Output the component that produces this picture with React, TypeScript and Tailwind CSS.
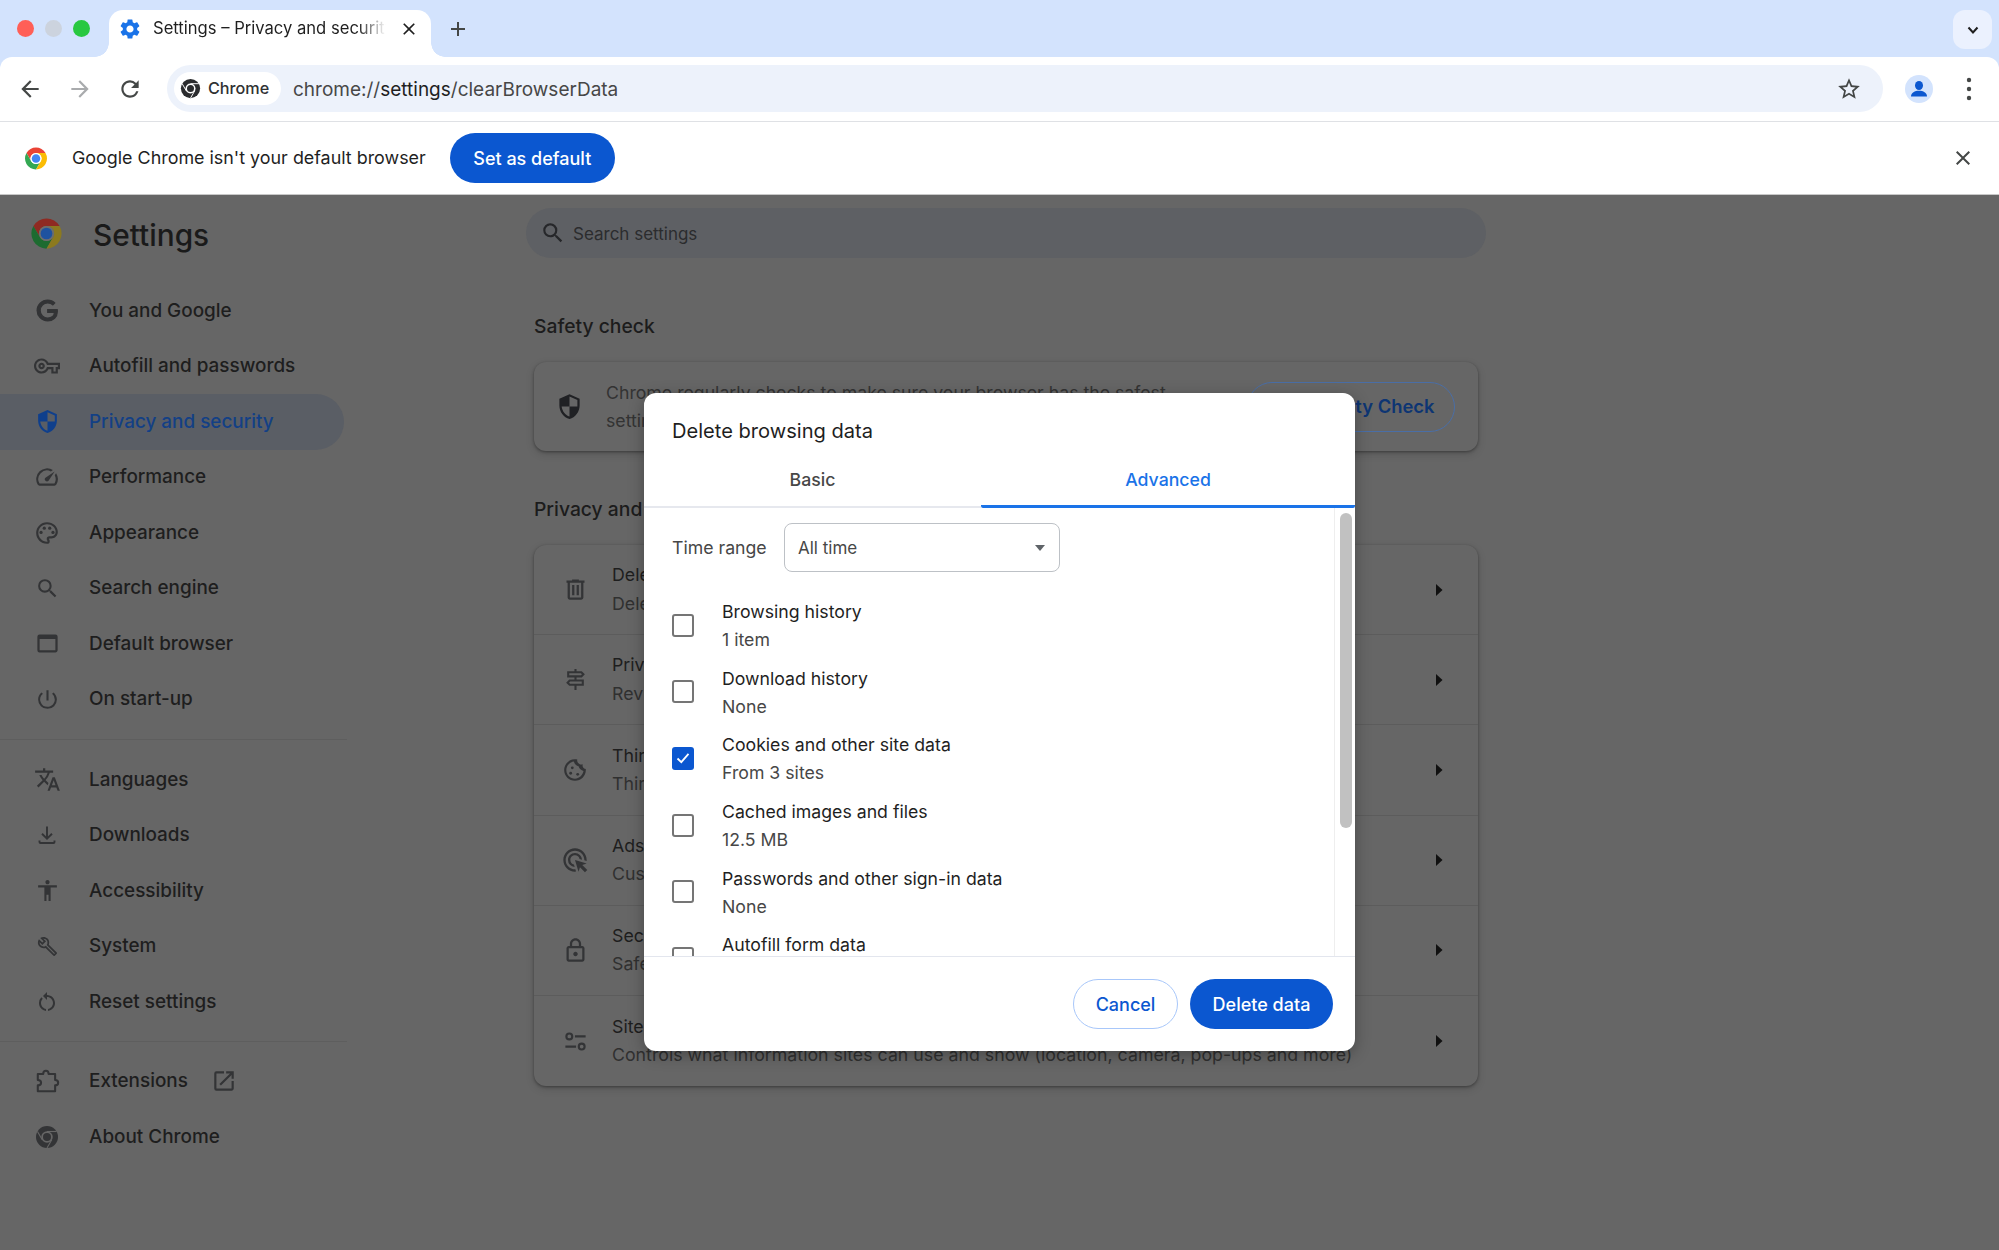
import React from "react";

type IconProps = { d?: string; className?: string; children?: React.ReactNode };
const I = ({ d, className = "", children }: IconProps) => (
  <svg viewBox="0 0 24 24" fill="currentColor" className={`shrink-0 ${className}`}>
    {d && <path d={d} />}
    {children}
  </svg>
);

const P = {
  back: "M20 11H7.83l5.59-5.59L12 4l-8 8 8 8 1.41-1.41L7.83 13H20v-2z",
  forward: "M12 4l-1.41 1.41L16.17 11H4v2h12.17l-5.58 5.59L12 20l8-8z",
  refresh: "M17.65 6.35A7.958 7.958 0 0 0 12 4c-4.42 0-7.99 3.58-7.99 8s3.57 8 7.99 8c3.73 0 6.84-2.55 7.73-6h-2.08A5.99 5.99 0 0 1 12 18c-3.31 0-6-2.69-6-6s2.69-6 6-6c1.66 0 3.14.69 4.22 1.78L13 11h7V4l-2.35 2.35z",
  gear: "M19.14 12.94c.04-.3.06-.61.06-.94 0-.32-.02-.64-.07-.94l2.03-1.58a.49.49 0 0 0 .12-.61l-1.92-3.32a.488.488 0 0 0-.59-.22l-2.39.96c-.5-.38-1.03-.7-1.62-.94l-.36-2.54a.484.484 0 0 0-.48-.41h-3.84c-.24 0-.43.17-.47.41l-.36 2.54c-.59.24-1.13.57-1.62.94l-2.39-.96c-.22-.08-.47 0-.59.22L2.74 8.87c-.12.21-.08.47.12.61l2.03 1.58c-.05.3-.09.63-.09.94s.02.64.07.94l-2.03 1.58a.49.49 0 0 0-.12.61l1.92 3.32c.12.22.37.29.59.22l2.39-.96c.5.38 1.03.7 1.62.94l.36 2.54c.05.24.24.41.48.41h3.84c.24 0 .44-.17.47-.41l.36-2.54c.59-.24 1.13-.56 1.62-.94l2.39.96c.22.08.47 0 .59-.22l1.92-3.32c.12-.22.07-.47-.12-.61l-2.01-1.58zM12 15.6c-1.98 0-3.6-1.62-3.6-3.6s1.62-3.6 3.6-3.6 3.6 1.62 3.6 3.6-1.62 3.6-3.6 3.6z",
  close: "M19 6.41 17.59 5 12 10.59 6.41 5 5 6.41 10.59 12 5 17.59 6.41 19 12 13.41 17.59 19 19 17.59 13.41 12z",
  star: "M22 9.24l-7.19-.62L12 2 9.19 8.63 2 9.24l5.46 4.73L5.82 21 12 17.27 18.18 21l-1.63-7.03L22 9.24zM12 15.4l-3.76 2.27 1-4.28-3.32-2.88 4.38-.38L12 6.1l1.71 4.04 4.38.38-3.32 2.88 1 4.28L12 15.4z",
  search: "M15.5 14h-.79l-.28-.27A6.471 6.471 0 0 0 16 9.5 6.5 6.5 0 1 0 9.5 16c1.61 0 3.09-.59 4.23-1.57l.27.28v.79l5 4.99L20.49 19l-4.99-5zm-6 0C7.01 14 5 11.99 5 9.5S7.01 5 9.5 5 14 7.01 14 9.5 11.99 14 9.5 14z",
  google: "M21.35 11.1h-9.17v2.73h6.51c-.33 3.81-3.5 5.44-6.5 5.44C8.36 19.27 5 16.25 5 12c0-4.1 3.2-7.27 7.2-7.27 3.09 0 4.9 1.97 4.9 1.97L19 4.72S16.56 2 12.1 2C6.42 2 2 6.8 2 12c0 5.05 4.13 10 10.22 10 5.35 0 9.25-3.67 9.25-9.09 0-1.15-.12-1.81-.12-1.81z",
  key: "M22 19h-6v-4h-2.68c-1.14 2.42-3.6 4-6.32 4-3.86 0-7-3.14-7-7s3.14-7 7-7c2.72 0 5.17 1.58 6.32 4H24v6h-2v4zm-4-2h2v-4h2v-2H11.94l-.23-.67C11.01 8.34 9.11 7 7 7c-2.76 0-5 2.24-5 5s2.24 5 5 5c2.11 0 4.01-1.34 4.71-3.33l.23-.67H18v4zM7 15c-1.65 0-3-1.35-3-3s1.35-3 3-3 3 1.35 3 3-1.35 3-3 3zm0-4c-.55 0-1 .45-1 1s.45 1 1 1 1-.45 1-1-.45-1-1-1z",
  shield: "M12 1L3 5v6c0 5.55 3.84 10.74 9 12 5.16-1.26 9-6.45 9-12V5l-9-4zm0 10.99h7c-.53 4.12-3.28 7.79-7 8.94V12H5V6.3l7-3.11v8.8z",
  speed: "M20.38 8.57l-1.23 1.85a8 8 0 0 1-.22 7.58H5.07A8 8 0 0 1 15.58 6.85l1.85-1.23A10 10 0 0 0 3.35 19a2 2 0 0 0 1.72 1h13.85a2 2 0 0 0 1.74-1 10 10 0 0 0-.27-10.44zm-9.79 6.84a2 2 0 0 0 2.83 0l5.66-8.49-8.49 5.66a2 2 0 0 0 0 2.83z",
  palette: "M12 22C6.49 22 2 17.51 2 12S6.49 2 12 2s10 4.04 10 9c0 3.31-2.69 6-6 6h-1.77c-.28 0-.5.22-.5.5 0 .12.05.23.13.33.41.47.64 1.06.64 1.67A2.5 2.5 0 0 1 12 22zm0-18c-4.41 0-8 3.59-8 8s3.59 8 8 8c.28 0 .5-.22.5-.5a.54.54 0 0 0-.14-.35c-.41-.46-.63-1.05-.63-1.65a2.5 2.5 0 0 1 2.5-2.5H16c2.21 0 4-1.79 4-4 0-3.86-3.59-7-8-7z",
  asset: "M19 4H5a2 2 0 0 0-2 2v12a2 2 0 0 0 2 2h14c1.1 0 2-.9 2-2V6a2 2 0 0 0-2-2zm0 14H5V8h14v10z",
  power: "M13 3h-2v10h2V3zm4.83 2.17l-1.42 1.42A6.92 6.92 0 0 1 19 12c0 3.87-3.13 7-7 7A6.995 6.995 0 0 1 7.58 6.58L6.17 5.17A8.932 8.932 0 0 0 3 12a9 9 0 0 0 18 0c0-2.74-1.23-5.18-3.17-6.83z",
  translate: "M12.87 15.07l-2.54-2.51.03-.03A17.52 17.52 0 0 0 14.07 6H17V4h-7V2H8v2H1v1.99h11.17C11.5 7.92 10.44 9.75 9 11.35 8.07 10.32 7.3 9.19 6.69 8h-2c.73 1.63 1.73 3.17 2.98 4.56l-5.09 5.02L4 19l5-5 3.11 3.11.76-2.04zM18.5 10h-2L12 22h2l1.12-3h4.75L21 22h2l-4.5-12zm-2.62 7l1.62-4.33L19.12 17h-3.24z",
  access: "M12 2c1.1 0 2 .9 2 2s-.9 2-2 2-2-.9-2-2 .9-2 2-2zm9 7h-6v13h-2v-6h-2v6H9V9H3V7h18v2z",
  wrench: "M22.61 18.99l-9.08-9.08c.93-2.34.45-5.1-1.44-7C9.79.61 6.21.4 3.66 2.25L7.5 6.1 6.08 7.51 2.25 3.69C.4 6.23.61 9.82 2.91 12.11c1.86 1.86 4.57 2.35 6.88 1.48l9.11 9.11c.39.39 1.02.39 1.41 0l2.3-2.3c.4-.38.4-1.01 0-1.41zm-3 1.6l-9.46-9.46c-.61.45-1.29.72-2 .82-1.36.2-2.79-.21-3.83-1.25C3.37 9.76 2.93 8.5 3 7.26l3.09 3.09 4.24-4.24-3.09-3.09c1.24-.07 2.49.37 3.44 1.31a4.469 4.469 0 0 1 1.24 3.96 4.35 4.35 0 0 1-.88 1.96l9.45 9.45-.88.88z",
  restore: "M12 5V2L8 6l4 4V7c3.31 0 6 2.69 6 6 0 2.97-2.17 5.43-5 5.91v2.02c3.95-.49 7-3.85 7-7.93 0-4.42-3.58-8-8-8zm-6 8c0-1.65.67-3.15 1.76-4.24L6.34 7.34A7.96 7.96 0 0 0 4 13c0 4.08 3.05 7.44 7 7.93v-2.02c-2.83-.48-5-2.94-5-5.91z",
  open: "M19 19H5V5h7V3H5a2 2 0 0 0-2 2v14a2 2 0 0 0 2 2h14c1.1 0 2-.9 2-2v-7h-2v7zM14 3v2h3.59l-9.83 9.83 1.41 1.41L19 6.41V10h2V3h-7z",
  trash: "M15 4V3H9v1H4v2h1v13c0 1.1.9 2 2 2h10c1.1 0 2-.9 2-2V6h1V4h-5zm2 15H7V6h10v13zM9 8h2v9H9zm4 0h2v9h-2z",
  signpost: "M13 10h5l3-3-3-3h-5V2h-2v2H4v6h7v2H6l-3 3 3 3h5v4h2v-4h7v-6h-7v-2zM6 6h11.17l1 1-1 1H6V6zm12 10H6.83l-1-1 1-1H18v2z",
  cookie: "M21.95 10.99c-1.79-.03-3.7-1.95-2.68-4.22-2.97 1-5.78-1.59-5.19-4.56C7.11.74 2 6.41 2 12c0 5.52 4.48 10 10 10 5.89 0 10.54-5.08 9.95-11.01zM12 20c-4.41 0-8.09-3.59-7.99-8.02.09-3.84 2.73-7.01 6.9-7.78.59 2.05 2.27 3.78 4.4 4.39.64 2.27 2.41 3.95 4.56 4.32C19.07 16.81 15.77 20 12 20z",
  ads: "M11.71 17.99A5.993 5.993 0 0 1 6 12c0-3.31 2.69-6 6-6 3.22 0 5.84 2.53 5.99 5.71l-2.1-.63A3.999 3.999 0 0 0 12 8c-2.21 0-4 1.79-4 4 0 1.88 1.3 3.47 3.08 3.89l.63 2.1zM22 12c0 .3-.01.6-.04.9l-1.97-.59c.01-.1.01-.21.01-.31 0-4.42-3.58-8-8-8s-8 3.58-8 8 3.58 8 8 8c.1 0 .21 0 .31-.01l.59 1.97c-.3.03-.6.04-.9.04-5.52 0-10-4.48-10-10S6.48 2 12 2s10 4.48 10 10zm-3.77 4.26L22 15l-10-3 3 10 1.26-3.77 4.27 4.27 1.98-1.98-4.28-4.26z",
  lock: "M18 8h-1V6c0-2.76-2.24-5-5-5S7 3.24 7 6v2H6c-1.1 0-2 .9-2 2v10c0 1.1.9 2 2 2h12c1.1 0 2-.9 2-2V10c0-1.1-.9-2-2-2zM9 6c0-1.66 1.34-3 3-3s3 1.34 3 3v2H9V6zm9 14H6V10h12v10zm-6-3c1.1 0 2-.9 2-2s-.9-2-2-2-2 .9-2 2 .9 2 2 2z",
};

const ChromeLogo = ({ className = "", red, green, yellow, ring, blue }: { className?: string; red: string; green: string; yellow: string; ring: string; blue: string }) => (
  <svg viewBox="0 0 48 48" className={className}>
    <path fill={red} d="M43.05 13A22 22 0 0 0 4.95 13L14.47 29.5A11 11 0 0 1 24 13Z" />
    <path fill={green} d="M4.95 13A22 22 0 0 0 24 46L33.53 29.5A11 11 0 0 1 14.47 29.5Z" />
    <path fill={yellow} d="M24 46A22 22 0 0 0 43.05 13H24A11 11 0 0 1 33.53 29.5Z" />
    <circle cx="24" cy="24" r="11" fill={ring} />
    <circle cx="24" cy="24" r="8.5" fill={blue} />
  </svg>
);

const MonoChrome = ({ className = "", ring, ink }: { className?: string; ring: string; ink: string }) => (
  <svg viewBox="0 0 48 48" className={className}>
    <circle cx="24" cy="24" r="22" fill={ink} />
    <g stroke={ring} strokeWidth="2.2" fill="none">
      <path d="M43.05 13H24" />
      <path d="M4.95 13 14.47 29.5" />
      <path d="M24 46 33.53 29.5" />
    </g>
    <circle cx="24" cy="24" r="11.5" fill={ring} />
    <circle cx="24" cy="24" r="8" fill={ink} />
  </svg>
);

const Download = ({ className = "" }: { className?: string }) => (
  <svg viewBox="0 0 24 24" fill="none" stroke="currentColor" strokeWidth="1.9" className={`shrink-0 ${className}`}>
    <path d="M12 3.5v12M7 10.8l5 4.9 5-4.9M4.5 17.5V19c0 .6.4 1 1 1h13c.6 0 1-.4 1-1v-1.5" />
  </svg>
);

const Tune = ({ className = "" }: { className?: string }) => (
  <svg viewBox="0 0 24 24" fill="none" stroke="currentColor" strokeWidth="1.9" className={`shrink-0 ${className}`}>
    <circle cx="6.5" cy="7.5" r="2.6" />
    <path d="M11.5 7.5H21M3 16.5h9.5" />
    <circle cx="17.5" cy="16.5" r="2.6" />
  </svg>
);

const Puzzle = ({ className = "" }: { className?: string }) => (
  <svg viewBox="0 0 24 24" fill="none" stroke="currentColor" strokeWidth="1.9" strokeLinejoin="round" className={`shrink-0 ${className}`}>
    <path d="M3.5 5.5H8.5C8.5 3.5 9.5 2.5 11 2.5S13.5 3.5 13.5 5.5H19.5V11C21.3 11 22.3 12 22.3 13.5S21.3 16 19.5 16V21.5H3.5V16C5.5 16 6.5 15 6.5 13.5S5.5 11 3.5 11Z" />
  </svg>
);

const GoogleG = ({ className = "" }: { className?: string }) => (
  <svg viewBox="0 0 24 24" fill="currentColor" stroke="currentColor" strokeWidth="1.1" className={`shrink-0 ${className}`}>
    <path d={P.google} />
  </svg>
);

const nav1 = [
  { label: "You and Google", icon: <GoogleG className="w-[25px] h-[25px]" /> },
  { label: "Autofill and passwords", icon: <I d={P.key} className="w-[26px] h-[26px]" /> },
  { label: "Privacy and security", icon: <I d={P.shield} className="w-[25px] h-[25px] -scale-x-100" />, active: true },
  { label: "Performance", icon: <I d={P.speed} className="w-[26px] h-[26px]" /> },
  { label: "Appearance", icon: (
    <I d={P.palette} className="w-[26px] h-[26px]">
      <circle cx="6.5" cy="11.5" r="1.5" />
      <circle cx="9.5" cy="7.5" r="1.5" />
      <circle cx="14.5" cy="7.5" r="1.5" />
      <circle cx="17.5" cy="11.5" r="1.5" />
    </I>
  ) },
  { label: "Search engine", icon: <I d={P.search} className="w-[25px] h-[25px]" /> },
  { label: "Default browser", icon: <I d={P.asset} className="w-[27px] h-[27px]" /> },
  { label: "On start-up", icon: <I d={P.power} className="w-[25px] h-[25px]" /> },
];
const nav2 = [
  { label: "Languages", icon: <I d={P.translate} className="w-[27px] h-[27px]" /> },
  { label: "Downloads", icon: <Download className="w-[24px] h-[24px]" /> },
  { label: "Accessibility", icon: <I d={P.access} className="w-[25px] h-[25px]" /> },
  { label: "System", icon: <I d={P.wrench} className="w-[21px] h-[21px]" /> },
  { label: "Reset settings", icon: <I d={P.restore} className="w-[24px] h-[24px]" /> },
];

const rows = [
  { t: "Delete browsing data", s: "Delete history, cookies, cache and more", icon: <I d={P.trash} className="w-[27px] h-[27px]" /> },
  { t: "Privacy Guide", s: "Review key privacy and security controls", icon: <I d={P.signpost} className="w-[25px] h-[25px]" /> },
  { t: "Third-party cookies", s: "Third-party cookies are blocked in Incognito mode", icon: (
    <I d={P.cookie} className="w-[26px] h-[26px]">
      <circle cx="9.5" cy="10" r="1.3" />
      <circle cx="8" cy="15" r="1.3" />
      <circle cx="14.5" cy="16" r="1.3" />
    </I>
  ) },
  { t: "Ads privacy", s: "Customise the info used by sites to show you ads", icon: <I d={P.ads} className="w-[28px] h-[28px]" /> },
  { t: "Security", s: "Safe Browsing (protection from dangerous sites) and other security settings", icon: <I d={P.lock} className="w-[27px] h-[27px]" /> },
  { t: "Site settings", s: "Controls what information sites can use and show (location, camera, pop-ups and more)", icon: <Tune className="w-[27px] h-[27px]" /> },
];

const checks = [
  { t: "Browsing history", s: "1 item" },
  { t: "Download history", s: "None" },
  { t: "Cookies and other site data", s: "From 3 sites", on: true },
  { t: "Cached images and files", s: "12.5 MB" },
  { t: "Passwords and other sign-in data", s: "None" },
  { t: "Autofill form data", s: "None" },
];

const NavRow = ({ label, icon, active }: { label: string; icon: React.ReactNode; active?: boolean }) => (
  <div className={`flex items-center h-[55.5px] w-[344px] rounded-r-full ${active ? "bg-[#5a5e65] text-[#134085]" : "text-[#1e1e1e]"}`}>
    <div className={`w-[89px] pl-[5px] flex justify-center shrink-0 ${active ? "text-[#0f3f8c]" : "text-[#333436]"}`}>{icon}</div>
    <span className="text-[18.9px] font-medium">{label}</span>
  </div>
);

export default function App() {
  return (
    <div className="relative w-[1999px] h-[1250px] overflow-hidden bg-[#d3e3fd] flex flex-col font-['Inter','Liberation_Sans',sans-serif]">
      {/* Tab strip */}
      <div className="h-[57px] shrink-0 flex items-end relative">
        <div className="flex items-center gap-[11px] pl-[17px] h-[57px] pb-[1px] w-[109px] shrink-0">
          <span className="w-[17px] h-[17px] rounded-full bg-[#ff5f57]" />
          <span className="w-[17px] h-[17px] rounded-full bg-[#ccd3de]" />
          <span className="w-[17px] h-[17px] rounded-full bg-[#28c840]" />
        </div>
        <div className="relative w-[322px] h-[47px] bg-white rounded-t-[14px] flex items-center shrink-0 pb-[10px]">
          <span className="absolute -left-[14px] bottom-0 w-[14px] h-[14px] bg-[radial-gradient(circle_at_0_0,transparent_13.5px,white_14px)]" />
          <span className="absolute -right-[14px] bottom-0 w-[14px] h-[14px] bg-[radial-gradient(circle_at_100%_0,transparent_13.5px,white_14px)]" />
          <I d={P.gear} className="ml-[9px] w-[24px] h-[24px] text-[#1a73e8]" />
          <span className="ml-[11px] w-[233px] overflow-hidden whitespace-nowrap text-[16.6px] text-[#1f1f1f] [mask-image:linear-gradient(to_right,black_88%,transparent)]">
            Settings – Privacy and security
          </span>
          <I d={P.close} className="ml-[13px] w-[20px] h-[20px] text-[#1f1f1f]" />
        </div>
        <div className="ml-[17px] mb-[14px] w-[20px] h-[28px] flex items-center">
          <svg viewBox="0 0 20 20" className="w-[20px] h-[20px] text-[#444746]" fill="none" stroke="currentColor" strokeWidth="2">
            <path d="M10 3v14M3 10h14" />
          </svg>
        </div>
        <div className="ml-auto mr-[7px] mb-[8px] w-[39px] h-[39px] rounded-[12px] bg-[#ebf1fe] flex items-center justify-center">
          <svg viewBox="0 0 14 14" className="w-[14px] h-[14px] text-[#1f1f1f]" fill="none" stroke="currentColor" strokeWidth="2">
            <path d="M2.5 4.5 7 9.5l4.5-5" />
          </svg>
        </div>
      </div>

      {/* Toolbar */}
      <div className="h-[65px] shrink-0 bg-white rounded-t-[12px] flex items-center border-b border-[#dfe1e5] pb-[1px]">
        <div className="w-[167px] shrink-0 flex items-center pl-[17px] gap-[24px]">
          <I d={P.back} className="w-[26px] h-[26px] text-[#444746]" />
          <I d={P.forward} className="w-[26px] h-[26px] text-[#a9abad]" />
          <I d={P.refresh} className="w-[26px] h-[26px] text-[#444746]" />
        </div>
        <div className="w-[1716px] h-[47px] rounded-full bg-[#edf2fb] flex items-center pl-[7px] pr-[21px]">
          <div className="h-[33px] w-[107px] rounded-full bg-white flex items-center pl-[6px] gap-[7px]">
            <MonoChrome className="w-[21px] h-[21px]" ring="#ffffff" ink="#2b2c2e" />
            <span className="text-[16.2px] font-medium text-[#303133]">Chrome</span>
          </div>
          <span className="ml-[12px] pt-[3px] text-[19px] text-[#474747]">
            chrome://<span className="text-[#1f1f1f]">settings</span>/clearBrowserData
          </span>
          <I d={P.star} className="ml-auto w-[26px] h-[26px] text-[#444746]" />
        </div>
        <div className="ml-[22px] w-[28px] h-[28px] rounded-full bg-[#d3e3fd] flex items-center justify-center overflow-hidden">
          <svg viewBox="0 0 28 28" className="w-[28px] h-[28px] text-[#0b57d0]" fill="currentColor">
            <ellipse cx="14" cy="10.5" rx="4" ry="4.6" />
            <path d="M6 21.5c0-3.8 3.8-5.7 8-5.7s8 1.9 8 5.7z" />
          </svg>
        </div>
        <div className="ml-[22px] w-[28px] flex justify-center">
          <svg viewBox="0 0 6 26" className="w-[6px] h-[26px] text-[#444746]" fill="currentColor">
            <circle cx="3" cy="4" r="2.2" />
            <circle cx="3" cy="13" r="2.2" />
            <circle cx="3" cy="22" r="2.2" />
          </svg>
        </div>
      </div>

      {/* Infobar */}
      <div className="h-[73px] shrink-0 bg-white flex items-center border-b border-[#c8c8c8] pl-[24px] pr-[24px]">
        <ChromeLogo className="w-[24px] h-[25px]" red="#ea4335" green="#34a853" yellow="#fbbc04" ring="#ffffff" blue="#4285f4" />
        <span className="ml-[24px] text-[17.9px] text-[#1f1f1f]">Google Chrome isn't your default browser</span>
        <div className="ml-[24px] h-[50px] w-[165px] rounded-full bg-[#0b57d0] text-white text-[18px] font-medium flex items-center justify-center">
          Set as default
        </div>
        <I d={P.close} className="ml-auto w-[24px] h-[24px] text-[#444746]" />
      </div>

      {/* Dimmed settings page */}
      <div className="flex-1 bg-[#666666] flex min-h-0">
        <aside className="w-[347px] shrink-0 flex flex-col">
          <div className="h-[88px] flex items-start pt-[22px] pl-[30px]">
            <ChromeLogo className="w-[33px] h-[33px]" red="#8f2a22" green="#1d6b30" yellow="#8c7a1f" ring="#6e6e6e" blue="#1f52a0" />
            <span className="ml-[30px] text-[29.8px] leading-[36px] font-medium text-[#1a1a1a]">Settings</span>
          </div>
          {nav1.map((n) => <NavRow key={n.label} {...n} />)}
          <div className="my-[12px] h-px bg-[#5e5e5e]" />
          {nav2.map((n) => <NavRow key={n.label} {...n} />)}
          <div className="mt-[11px] mb-[12px] h-px bg-[#5e5e5e]" />
          <div className="flex items-center h-[55.5px] text-[#1e1e1e]">
            <div className="w-[89px] pl-[5px] flex justify-center text-[#333436]"><Puzzle className="w-[26px] h-[26px]" /></div>
            <span className="text-[18.9px] font-medium">Extensions</span>
            <I d={P.open} className="ml-[23px] w-[26px] h-[26px] text-[#333436]" />
          </div>
          <div className="flex items-center h-[55.5px] text-[#1e1e1e]">
            <div className="w-[89px] pl-[5px] flex justify-center"><MonoChrome className="w-[24px] h-[24px]" ring="#666666" ink="#333436" /></div>
            <span className="text-[18.9px] font-medium">About Chrome</span>
          </div>
        </aside>

        <main className="ml-[187px] w-[944px] flex flex-col">
          <div className="mt-[13px] -ml-[8px] w-[960px] h-[50px] rounded-full bg-[#5e6064] flex items-center pl-[14px]">
            <I d={P.search} className="w-[26px] h-[26px] text-[#26272a]" />
            <span className="ml-[7px] pt-[3px] text-[17px] text-[#2b2c2e]">Search settings</span>
          </div>

          <h2 className="mt-[56px] text-[19.3px] leading-[24px] font-medium text-[#1c1c1c]">Safety check</h2>
          <div className="mt-[24px] h-[89px] shrink-0 rounded-[12px] bg-[#666666] shadow-[0_1px_3px_rgba(0,0,0,0.35),0_3px_8px_rgba(0,0,0,0.15)] flex items-center pl-[22px] pr-[23px]">
            <I d={P.shield} className="w-[27px] h-[27px] text-[#202124] -scale-x-100" />
            <div className="ml-[23px] text-[17.7px] leading-[28px] text-[#333333]">
              <div>Chrome regularly checks to make sure your browser has the safest</div>
              <div>settings. We'll let you know if anything needs your review.</div>
            </div>
            <div className="ml-auto h-[50px] w-[208px] shrink-0 rounded-full border-[1.5px] border-[#4a6ea6] flex items-center justify-center pr-[4px] text-[18.4px] font-semibold text-[#0d3573]">
              Go to Safety Check
            </div>
          </div>

          <h2 className="mt-[46px] text-[19.3px] leading-[24px] font-medium text-[#1c1c1c]">Privacy and security</h2>
          <div className="mt-[24px] rounded-[12px] bg-[#666666] shadow-[0_1px_3px_rgba(0,0,0,0.35),0_3px_8px_rgba(0,0,0,0.15)] flex flex-col divide-y divide-[#5c5c5c]">
            {rows.map((r) => (
              <div key={r.t} className="h-[90.2px] flex items-center pl-[29px] pr-[35px]">
                <div className="w-[24px] flex justify-center text-[#333436] shrink-0">{r.icon}</div>
                <div className="ml-[25px] text-[17.75px] leading-[28.4px]">
                  <div className="text-[#1e1e1e]">{r.t}</div>
                  <div className="text-[#303030]">{r.s}</div>
                </div>
                <svg viewBox="0 0 8 12" className="ml-auto w-[8px] h-[12px] text-[#111111]" fill="currentColor">
                  <path d="M1 0v12l6.5-6z" />
                </svg>
              </div>
            ))}
          </div>
        </main>
      </div>

      {/* Dialog */}
      <div className="absolute left-[644px] top-[393px] w-[711px] h-[658px] rounded-[12px] bg-white flex flex-col overflow-hidden shadow-[0_4px_16px_rgba(0,0,0,0.3)]">
        <div className="h-[68px] pl-[28px] pt-[25px] shrink-0 text-[20.1px] leading-[26px] text-[#1f1f1f]">Delete browsing data</div>
        <div className="h-[47px] shrink-0 flex">
          <div className="w-[337px] border-b-2 border-[#e6e8ee] flex items-center justify-center text-[17.7px] font-medium text-[#474747] pb-[6px]">Basic</div>
          <div className="w-[374px] border-b-[3px] border-[#1a73e8] rounded-b-[2px] flex items-center justify-center text-[17.7px] font-medium text-[#1a73e8] pb-[5px]">Advanced</div>
        </div>
        <div className="flex-1 min-h-0 flex">
          <div className="flex-1 min-w-0 overflow-hidden pl-[28px]">
            <div className="mt-[15px] flex items-center">
              <span className="text-[17.7px] text-[#474747] w-[112px] pt-[2px]">Time range</span>
              <div className="w-[276px] h-[49px] rounded-[8px] border-[1.5px] border-[#bdc1c6] flex items-center pl-[13px] pr-[14px] text-[17px] text-[#474747]">
                <span className="pt-[3px]">All time</span>
                <svg viewBox="0 0 10 6" className="ml-auto w-[10px] h-[6px] text-[#5f6368]" fill="currentColor">
                  <path d="M0 0h10L5 6z" />
                </svg>
              </div>
            </div>
            <div className="mt-[21px] flex flex-col">
              {checks.map((c) => (
                <div key={c.t} className="h-[66.6px] shrink-0 flex items-center gap-[28px]">
                  <div className={`-mt-[2px] w-[22px] h-[23px] rounded-[3px] shrink-0 flex items-center justify-center ${c.on ? "bg-[#0b57d0]" : "border-[2.5px] border-[#757575]"}`}>
                    {c.on && (
                      <svg viewBox="0 0 16 16" className="w-[16px] h-[16px] text-white" fill="none" stroke="currentColor" strokeWidth="1.8">
                        <path d="M2.5 8.5 6.3 12.2 13.5 3.8" />
                      </svg>
                    )}
                  </div>
                  <div className="text-[17.7px] leading-[28px]">
                    <div className="text-[#1f1f1f]">{c.t}</div>
                    <div className="text-[#474747]">{c.s}</div>
                  </div>
                </div>
              ))}
            </div>
          </div>
          <div className="w-[21px] shrink-0 border-l border-[#eeeeee] pl-[5px] pt-[5px]">
            <div className="w-[11.5px] h-[315px] rounded-full bg-[#c1c1c1]" />
          </div>
        </div>
        <div className="h-[95px] shrink-0 border-t-[1.5px] border-[#e3e6ee] flex items-center justify-end gap-[12px] pr-[22px]">
          <div className="w-[105px] h-[50px] rounded-full border-[1.5px] border-[#a8c7fa] flex items-center justify-center text-[18px] font-medium text-[#0b57d0]">Cancel</div>
          <div className="w-[143px] h-[50px] rounded-full bg-[#0b57d0] flex items-center justify-center text-[18px] font-medium text-white">Delete data</div>
        </div>
      </div>
    </div>
  );
}
